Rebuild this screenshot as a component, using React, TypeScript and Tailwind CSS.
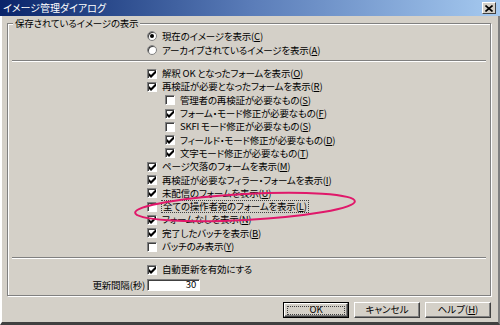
import React from 'react';

const jp = "font-['Noto_Sans_CJK_JP',sans-serif] [font-feature-settings:'palt']";

function Check({ on }: { on: boolean }) {
  return (
    <span className="w-[10px] h-[10px] shrink-0 bg-white border border-t-[#808080] border-l-[#808080] border-b-white border-r-white shadow-[inset_1px_1px_0_#404040] flex items-center justify-center">
      {on && (
        <svg width="7" height="7" viewBox="0 0 7 7" className="ml-[1px] mt-[1px]">
          <path d="M0 2 L2 4 L7 -1 L7 2 L2 7 L0 5 Z" fill="#000" />
        </svg>
      )}
    </span>
  );
}

function Radio({ on }: { on: boolean }) {
  return (
    <span className="w-[10px] h-[10px] shrink-0 rounded-full bg-white border border-[#808080] shadow-[inset_1px_1px_0_#404040] flex items-center justify-center">
      {on && <span className="w-[4px] h-[4px] rounded-full bg-black" />}
    </span>
  );
}

function Label({ t, k }: { t: string; k: string }) {
  return (
    <span className="whitespace-nowrap leading-[11px]">
      {t}(<u>{k}</u>)
    </span>
  );
}

function Separator() {
  return <div className="mx-[4px] h-[2px] border-t border-t-[#808080] border-b border-b-white" />;
}

const rows = [
  { t: '解釈 OK となったフォームを表示', k: 'O', on: true, sub: false },
  { t: '再検証が必要となったフォームを表示', k: 'R', on: true, sub: false },
  { t: '管理者の再検証が必要なもの', k: 'S', on: false, sub: true },
  { t: 'フォーム・モード修正が必要なもの', k: 'F', on: true, sub: true },
  { t: 'SKFI モード修正が必要なもの', k: 'S', on: false, sub: true },
  { t: 'フィールド・モード修正が必要なもの', k: 'D', on: true, sub: true },
  { t: '文字モード修正が必要なもの', k: 'T', on: true, sub: true },
  { t: 'ページ欠落のフォームを表示', k: 'M', on: true, sub: false },
  { t: '再検証が必要なフィラー・フォームを表示', k: 'I', on: true, sub: false },
  { t: '未配信のフォームを表示', k: 'U', on: true, sub: false },
  { t: '全ての操作者宛のフォームを表示', k: 'L', on: false, sub: false, focus: true },
  { t: 'フォームなしを表示', k: 'N', on: true, sub: false },
  { t: '完了したバッチを表示', k: 'B', on: true, sub: false },
  { t: 'バッチのみ表示', k: 'Y', on: false, sub: false },
];

function Btn({ children, def }: { children: React.ReactNode; def?: boolean }) {
  return (
    <div className={`w-[66px] h-[16px] ${def ? 'border border-black' : ''}`}>
      <div className="w-full h-full bg-[#d4d0c8] border border-t-white border-l-white border-b-[#404040] border-r-[#404040] shadow-[inset_-1px_-1px_0_#808080] flex items-center justify-center text-[9.5px] leading-none text-black">
        {def ? (
          <span className="w-[calc(100%-6px)] h-[calc(100%-5px)] outline outline-1 outline-dotted outline-[#404040] flex items-center justify-center">
            {children}
          </span>
        ) : (
          children
        )}
      </div>
    </div>
  );
}

export default function App() {
  return (
    <div className={`relative w-[500px] h-[325px] bg-[#d4d0c8] flex flex-col overflow-hidden text-black ${jp}`}>
      {/* タイトルバー */}
      <div className="h-[16px] shrink-0 flex items-center justify-between pl-[3px] pr-[4px] bg-gradient-to-r from-[#0a246a] via-[#5a7cb8] to-[#a6caf0]">
        <span className="text-white text-[10px] leading-none">イメージ管理ダイアログ</span>
        <span className="w-[14px] h-[12px] bg-[#d4d0c8] border border-t-white border-l-white border-b-[#404040] border-r-[#404040] flex items-center justify-center">
          <svg width="8" height="7" viewBox="0 0 8 7">
            <path d="M0.5 0.5 L7.5 6.5 M7.5 0.5 L0.5 6.5" stroke="#000" strokeWidth="1.6" />
          </svg>
        </span>
      </div>

      <div className="flex-1 flex flex-col border-l-2 border-l-white border-r-2 border-r-[#808080] border-b-[3px] border-b-[#404040] pl-[5px] pr-[7px] pt-[7px]">
        {/* グループボックス */}
        <div className="relative h-[273px] border border-[#808080] shadow-[inset_1px_1px_0_#fff,1px_1px_0_#fff] flex flex-col text-[9.5px] tracking-[-0.2px] leading-[11px]">
          <span className="absolute left-[5px] -top-[6px] px-[2px] bg-[#d4d0c8] leading-[11px]">保存されているイメージの表示</span>

          <div className="pt-[5px] pl-[139px] flex flex-col">
            <div className="h-[14px] flex items-center gap-[5px]">
              <Radio on />
              <Label t="現在のイメージを表示" k="C" />
            </div>
            <div className="h-[14px] flex items-center gap-[5px]">
              <Radio on={false} />
              <Label t="アーカイブされているイメージを表示" k="A" />
            </div>
          </div>

          <div className="mt-[3px]">
            <Separator />
          </div>

          <div className="mt-[5px] pl-[139px] flex flex-col">
            {rows.map((r, i) => (
              <div key={i} className={`h-[13.3px] flex items-center gap-[5px] ${r.sub ? 'ml-[18px]' : ''}`}>
                <Check on={r.on} />
                {r.focus ? (
                  <span className="outline outline-1 outline-dotted outline-[#404040] leading-[10px] px-[1px]">
                    <Label t={r.t} k={r.k} />
                  </span>
                ) : (
                  <Label t={r.t} k={r.k} />
                )}
              </div>
            ))}
          </div>

          <div className="mt-[4px]">
            <Separator />
          </div>

          <div className="mt-[4px] pl-[139px] h-[13px] flex items-center gap-[5px]">
            <Check on />
            <span>自動更新を有効にする</span>
          </div>

          <div className="mt-[3px] flex items-center h-[12px]">
            <span className="w-[139px] text-right pr-[2px] whitespace-nowrap">更新間隔(秒)</span>
            <div className="w-[53px] h-[12px] bg-white border border-t-[#808080] border-l-[#808080] border-b-white border-r-white shadow-[inset_1px_1px_0_#404040] flex items-center justify-end pr-[3px] leading-none">
              30
            </div>
          </div>
        </div>

        {/* ボタン */}
        <div className="mt-[6px] flex justify-end gap-[5px]">
          <Btn def>OK</Btn>
          <Btn>キャンセル</Btn>
          <Btn>
            <span>
              ヘルプ(<u>H</u>)
            </span>
          </Btn>
        </div>
      </div>

      {/* 注釈の赤い楕円 */}
      <svg className="absolute left-0 top-0 pointer-events-none" width="500" height="325">
        <ellipse cx="245" cy="207" rx="110" ry="13" transform="rotate(-3 245 207)" fill="none" stroke="#e0186a" strokeWidth="2" />
      </svg>
    </div>
  );
}
